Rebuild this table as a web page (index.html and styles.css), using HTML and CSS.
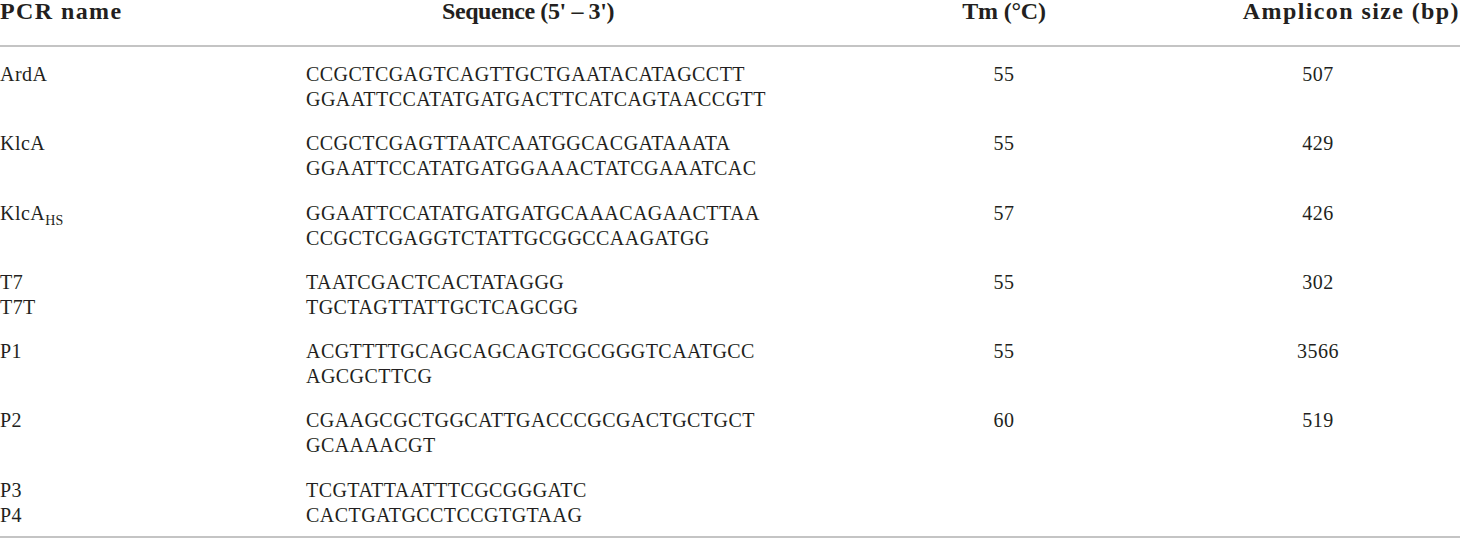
FILE: index.html
```html
<!DOCTYPE html>
<html>
<head>
<meta charset="utf-8">
<link rel="stylesheet" href="styles.css">
</head>
<body>
<table class="pcr">
  <colgroup>
    <col class="c-name"><col class="c-seq"><col class="c-tm"><col class="c-amp">
  </colgroup>
  <thead>
    <tr>
      <th class="h-name">PCR name</th>
      <th class="h-seq">Sequence (5' – 3')</th>
      <th class="h-tm">Tm (°C)</th>
      <th class="h-amp">Amplicon size (bp)</th>
    </tr>
  </thead>
  <tbody>
    <tr>
      <td>ArdA</td>
      <td class="seq">CCGCTCGAGTCAGTTGCTGAATACATAGCCTT<br>GGAATTCCATATGATGACTTCATCAGTAACCGTT</td>
      <td class="tm">55</td>
      <td class="amp">507</td>
    </tr>
    <tr>
      <td>KlcA</td>
      <td class="seq">CCGCTCGAGTTAATCAATGGCACGATAAATA<br>GGAATTCCATATGATGGAAACTATCGAAATCAC</td>
      <td class="tm">55</td>
      <td class="amp">429</td>
    </tr>
    <tr>
      <td>KlcA<sub>HS</sub></td>
      <td class="seq">GGAATTCCATATGATGATGCAAACAGAACTTAA<br>CCGCTCGAGGTCTATTGCGGCCAAGATGG</td>
      <td class="tm">57</td>
      <td class="amp">426</td>
    </tr>
    <tr>
      <td>T7<br>T7T</td>
      <td class="seq">TAATCGACTCACTATAGGG<br>TGCTAGTTATTGCTCAGCGG</td>
      <td class="tm">55</td>
      <td class="amp">302</td>
    </tr>
    <tr>
      <td>P1</td>
      <td class="seq">ACGTTTTGCAGCAGCAGTCGCGGGTCAATGCC<br>AGCGCTTCG</td>
      <td class="tm">55</td>
      <td class="amp">3566</td>
    </tr>
    <tr>
      <td>P2</td>
      <td class="seq">CGAAGCGCTGGCATTGACCCGCGACTGCTGCT<br>GCAAAACGT</td>
      <td class="tm">60</td>
      <td class="amp">519</td>
    </tr>
    <tr class="last">
      <td>P3<br>P4</td>
      <td class="seq">TCGTATTAATTTCGCGGGATC<br>CACTGATGCCTCCGTGTAAG</td>
      <td class="tm"></td>
      <td class="amp"></td>
    </tr>
  </tbody>
</table>
</body>
</html>
```

FILE: styles.css
```css
html, body {
  margin: 0;
  padding: 0;
  background: #ffffff;
}

body {
  font-family: "Liberation Serif", "Times New Roman", serif;
  color: #231f20;
}

.pcr {
  width: 1460px;
  table-layout: fixed;
  border-collapse: collapse;
  border-spacing: 0;
}

.c-name { width: 306px; }
.c-seq { width: 444px; }
.c-tm { width: 426px; }
.c-amp { width: 284px; }

.pcr th {
  font-size: 24px;
  font-weight: bold;
  letter-spacing: 1.4px;
  line-height: 22px;
  padding: 0 0 23px 0;
  border-bottom: 2px solid #c4c4c4;
  white-space: nowrap;
  vertical-align: top;
}

.pcr th.h-name { text-align: left; }
.pcr th.h-seq { text-align: center; letter-spacing: -0.4px; }
.pcr th.h-tm { text-align: center; padding-left: 82px; letter-spacing: -0.2px; }
.pcr th.h-amp { text-align: right; }

.pcr td {
  font-size: 20px;
  letter-spacing: 0.45px;
  line-height: 25px;
  padding: 15px 0 4.3px 0;
  vertical-align: top;
  white-space: nowrap;
  text-align: left;
}

.pcr td.tm {
  text-align: center;
  padding-left: 82px;
}

.pcr td.amp {
  text-align: center;
}

.pcr tr.last td {
  padding-bottom: 8.2px;
  border-bottom: 2px solid #c4c4c4;
}

.pcr sub {
  font-size: 14px;
  line-height: 0;
  vertical-align: -5px;
  letter-spacing: 0.3px;
}
```
